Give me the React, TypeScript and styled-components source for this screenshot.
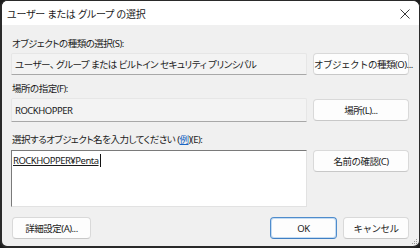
import styled, { createGlobalStyle } from "styled-components";

const GlobalStyle = createGlobalStyle`
  html, body {
    margin: 0;
    padding: 0;
    background: #1c1c1c;
  }
  body {
    font-family: "Noto Sans", "Noto Sans CJK JP", sans-serif;
    font-size: 9.5px;
    color: #1b1b1b;
  }
  * {
    box-sizing: border-box;
  }
`;

const Window = styled.div`
  width: 420px;
  height: 248px;
  background: #f0f0f0;
  border: 1px solid #2a2a2a;
  border-left-width: 2px;
  border-bottom-width: 2px;
  border-radius: 7px;
  overflow: hidden;
  position: relative;
  font-feature-settings: "palt";
  letter-spacing: -0.5px;
`;

const TitleBar = styled.div`
  height: 24px;
  background: #ffffff;
  display: flex;
  align-items: center;
  justify-content: space-between;
  padding: 1px 7px 0 5px;
`;

const Title = styled.span`
  font-size: 10px;
  letter-spacing: -0.2px;
  color: #1b1b1b;
`;

const Close = styled.button`
  border: none;
  background: transparent;
  width: 14px;
  height: 14px;
  padding: 0;
  display: flex;
  align-items: center;
  justify-content: center;
`;

const Content = styled.div`
  padding: 11px 10px 0 9px;
  display: flex;
  flex-direction: column;
`;

const Label = styled.div<{ $top: number }>`
  margin-top: ${(p) => p.$top}px;
  height: 14px;
  line-height: 14px;
  padding-left: 1px;
`;

const Row = styled.div<{ $top: number; $align?: string }>`
  margin-top: ${(p) => p.$top}px;
  display: grid;
  grid-template-columns: 296px 96px;
  column-gap: 6px;
  align-items: ${(p) => p.$align || "center"};
`;

const Field = styled.div<{ $h: number }>`
  height: ${(p) => p.$h}px;
  background: #f3f3f3;
  border: 1px solid #e6e6e6;
  border-bottom: 1px solid #a8a8a8;
  border-radius: 2px 2px 0 0;
  display: flex;
  align-items: center;
  padding-left: 3px;
  white-space: nowrap;
`;

const TextBox = styled.div`
  height: 57px;
  background: #ffffff;
  border: 1px solid #e2e2e2;
  border-top-color: #7a7a7a;
  border-left-color: #7a7a7a;
  padding: 3px 0 0 1px;
`;

const Entered = styled.span`
  text-decoration: underline;
  text-underline-offset: 1px;
  line-height: 14px;
  border-right: 1px solid #111;
  padding-right: 1px;
`;

const Button = styled.button<{ $w?: number; $primary?: boolean }>`
  height: 22px;
  width: ${(p) => (p.$w ? `${p.$w}px` : "100%")};
  background: #fdfdfd;
  border: 1px solid ${(p) => (p.$primary ? "#4f8ccc" : "#d9d9d9")};
  border-bottom-color: ${(p) => (p.$primary ? "#3f7fc4" : "#c8c8c8")};
  border-radius: 4px;
  font-family: inherit;
  font-size: 9.5px;
  letter-spacing: -0.5px;
  color: #1b1b1b;
  padding: 0;
  white-space: nowrap;
  box-shadow: ${(p) => (p.$primary ? "inset 0 0 0 1px #c5dcf2" : "none")};
`;

const Link = styled.span`
  color: #1a66c4;
  text-decoration: underline;
`;

const Footer = styled.div`
  margin-top: 10px;
  display: flex;
  align-items: center;
  padding-left: 1px;
`;

const Spacer = styled.div`
  flex: 1;
`;

const FooterRight = styled.div`
  display: flex;
  gap: 6px;
`;

const Grip = styled.svg`
  position: absolute;
  right: 1px;
  bottom: 1px;
`;

export default function App() {
  return (
    <>
      <GlobalStyle />
      <Window>
        <TitleBar>
          <Title>ユーザー または グループ の選択</Title>
          <Close aria-label="閉じる">
            <svg width="10" height="10" viewBox="0 0 10 10">
              <path d="M0.5 0.5 L9.5 9.5 M9.5 0.5 L0.5 9.5" stroke="#222" strokeWidth="0.9" />
            </svg>
          </Close>
        </TitleBar>
        <Content>
          <Label $top={1}>オブジェクトの種類の選択(S):</Label>
          <Row $top={2}>
            <Field $h={22}>ユーザー、 グループ または ビルトイン セキュリティ プリンシパル</Field>
            <Button>オブジェクトの種類(O)...</Button>
          </Row>
          <Label $top={7}>場所の指定(F):</Label>
          <Row $top={2}>
            <Field $h={24}>ROCKHOPPER</Field>
            <Button>場所(L)...</Button>
          </Row>
          <Label $top={11}>
            選択するオブジェクト名を入力してください (<Link>例</Link>)(E):
          </Label>
          <Row $top={3} $align="start">
            <TextBox>
              <Entered>ROCKHOPPER¥Penta</Entered>
            </TextBox>
            <Button>名前の確認(C)</Button>
          </Row>
          <Footer>
            <Button $w={79}>詳細設定(A)...</Button>
            <Spacer />
            <FooterRight>
              <Button $w={67} $primary>
                OK
              </Button>
              <Button $w={66}>キャンセル</Button>
            </FooterRight>
          </Footer>
        </Content>
        <Grip width="6" height="6" viewBox="0 0 6 6">
          <rect x="4" y="0" width="1" height="1" fill="#9a9a9a" />
          <rect x="2" y="2" width="1" height="1" fill="#9a9a9a" />
          <rect x="4" y="2" width="1" height="1" fill="#9a9a9a" />
          <rect x="0" y="4" width="1" height="1" fill="#9a9a9a" />
          <rect x="2" y="4" width="1" height="1" fill="#9a9a9a" />
          <rect x="4" y="4" width="1" height="1" fill="#9a9a9a" />
        </Grip>
      </Window>
    </>
  );
}
